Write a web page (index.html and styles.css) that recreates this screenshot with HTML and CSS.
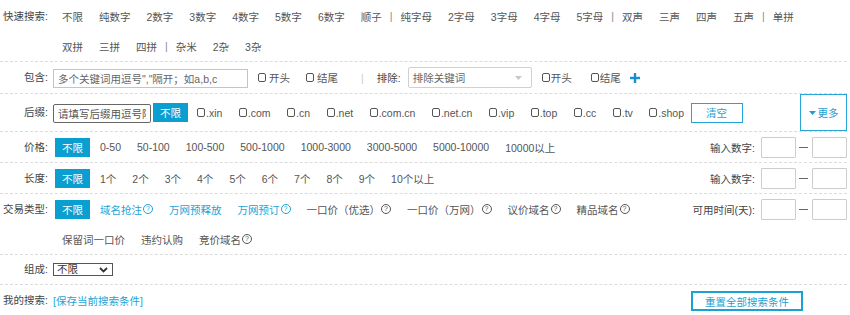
FILE: index.html
```html
<!DOCTYPE html>
<html lang="zh-CN">
<head>
  <meta charset="UTF-8" />
  <title>域名搜索</title>
  <link rel="stylesheet" href="styles.css">
</head>
<body>
  <div class="panel">

    <div class="row quick">
      <div class="label">快速搜索:</div>
      <div class="content">
        <div class="line">
          <a class="opt">不限</a><a class="opt">纯数字</a><a class="opt">2数字</a><a class="opt">3数字</a><a class="opt">4数字</a><a class="opt">5数字</a><a class="opt">6数字</a><a class="opt">顺子</a><span class="sep">|</span><a class="opt">纯字母</a><a class="opt">2字母</a><a class="opt">3字母</a><a class="opt">4字母</a><a class="opt">5字母</a><span class="sep">|</span><a class="opt">双声</a><a class="opt">三声</a><a class="opt">四声</a><a class="opt">五声</a><span class="sep">|</span><a class="opt">单拼</a>
        </div>
        <div class="line">
          <a class="opt">双拼</a><a class="opt">三拼</a><a class="opt">四拼</a><span class="sep">|</span><a class="opt">杂米</a><a class="opt">2杂</a><a class="opt">3杂</a>
        </div>
      </div>
    </div>

    <div class="row keyword">
      <div class="label">包含:</div>
      <div class="content">
        <input class="txt kw" type="text" placeholder="多个关键词用逗号&quot;,&quot;隔开；如a,b,c">
        <label class="chk spaced first"><span class="cb"></span>开头</label>
        <label class="chk spaced"><span class="cb"></span>结尾</label>
        <span class="sep light">|</span>
        <span class="sub-label">排除:</span>
        <div class="fake-select">
          <span>排除关键词</span>
          <svg width="7" height="4" viewBox="0 0 7 4"><polygon points="0,0 7,0 3.5,4" fill="#c8c8c8"/></svg>
        </div>
        <label class="chk first"><span class="cb"></span>开头</label>
        <label class="chk"><span class="cb"></span>结尾</label>
        <svg class="plus" width="10" height="10" viewBox="0 0 10 10"><rect x="3.8" y="0" width="2.4" height="10" fill="#1a8fd0"/><rect x="0" y="3.8" width="10" height="2.4" fill="#1a8fd0"/></svg>
      </div>
    </div>

    <div class="row suffix">
      <div class="label">后缀:</div>
      <div class="content">
        <input class="txt sfx-input" type="text" placeholder="请填写后缀用逗号隔开">
        <span class="btn-on">不限</span>
        <label class="chk sfx"><span class="cb"></span>.xin</label>
        <label class="chk sfx"><span class="cb"></span>.com</label>
        <label class="chk sfx"><span class="cb"></span>.cn</label>
        <label class="chk sfx"><span class="cb"></span>.net</label>
        <label class="chk sfx"><span class="cb"></span>.com.cn</label>
        <label class="chk sfx"><span class="cb"></span>.net.cn</label>
        <label class="chk sfx"><span class="cb"></span>.vip</label>
        <label class="chk sfx"><span class="cb"></span>.top</label>
        <label class="chk sfx"><span class="cb"></span>.cc</label>
        <label class="chk sfx"><span class="cb"></span>.tv</label>
        <label class="chk sfx"><span class="cb"></span>.shop</label>
        <span class="btn-line clear">清空</span>
        <div class="more">
          <svg width="7" height="4" viewBox="0 0 7 4"><polygon points="0,0 7,0 3.5,4" fill="#1e9fd3"/></svg>更多
        </div>
      </div>
    </div>

    <div class="row single">
      <div class="label">价格:</div>
      <div class="content">
        <div class="line">
          <span class="btn-on">不限</span><a class="opt">0-50</a><a class="opt">50-100</a><a class="opt">100-500</a><a class="opt">500-1000</a><a class="opt">1000-3000</a><a class="opt">3000-5000</a><a class="opt">5000-10000</a><a class="opt">10000以上</a>
        </div>
        <div class="range">
          <span>输入数字:</span><input class="num" type="text"><span class="dash"></span><input class="num" type="text">
        </div>
      </div>
    </div>

    <div class="row single">
      <div class="label">长度:</div>
      <div class="content">
        <div class="line">
          <span class="btn-on">不限</span><a class="opt">1个</a><a class="opt">2个</a><a class="opt">3个</a><a class="opt">4个</a><a class="opt">5个</a><a class="opt">6个</a><a class="opt">7个</a><a class="opt">8个</a><a class="opt">9个</a><a class="opt">10个以上</a>
        </div>
        <div class="range">
          <span>输入数字:</span><input class="num" type="text"><span class="dash"></span><input class="num" type="text">
        </div>
      </div>
    </div>

    <div class="row trade">
      <div class="label">交易类型:</div>
      <div class="content">
        <div class="lines">
          <div class="line">
            <span class="btn-on">不限</span><a class="opt blue">域名抢注<span class="q">?</span></a><a class="opt blue">万网预释放</a><a class="opt blue">万网预订<span class="q">?</span></a><a class="opt">一口价（优选）<span class="q">?</span></a><a class="opt">一口价（万网）<span class="q">?</span></a><a class="opt">议价域名<span class="q">?</span></a><a class="opt">精品域名<span class="q">?</span></a>
          </div>
          <div class="line">
            <a class="opt">保留词一口价</a><a class="opt">违约认购</a><a class="opt">竞价域名<span class="q">?</span></a>
          </div>
        </div>
        <div class="range">
          <span>可用时间(天):</span><input class="num" type="text"><span class="dash"></span><input class="num" type="text">
        </div>
      </div>
    </div>

    <div class="row compose">
      <div class="label">组成:</div>
      <div class="content">
        <div class="mini-select">
          <span>不限</span>
          <svg width="9" height="6" viewBox="0 0 9 6"><polyline points="1,1 4.5,4.5 8,1" fill="none" stroke="#333" stroke-width="1.8"/></svg>
        </div>
      </div>
    </div>

    <div class="row mine">
      <div class="label">我的搜索:</div>
      <div class="content">
        <a class="save">[保存当前搜索条件]</a>
        <span class="btn-line reset">重置全部搜索条件</span>
      </div>
    </div>

  </div>
</body>
</html>
```

FILE: styles.css
```css
body {
  margin: 0;
  font-family: "Liberation Sans", "Noto Sans CJK SC", sans-serif;
  font-size: 10.5px;
  color: #555;
  background: #fff;
}
.panel {
  margin-right: 3px;
}
.row {
  display: flex;
  border-bottom: 1px dashed #dcdcdc;
}
.label {
  width: 53px;
  padding-right: 5px;
  box-sizing: border-box;
  flex-shrink: 0;
  text-align: right;
  line-height: 30px;
  color: #444;
}
.content {
  flex: 1;
  display: flex;
  align-items: center;
}
.line {
  display: flex;
  align-items: center;
  height: 30px;
  padding-left: 1px;
}
.opt {
  display: inline-flex;
  align-items: center;
  padding: 0 8px;
  color: #555;
  white-space: nowrap;
  text-decoration: none;
  cursor: pointer;
}
.opt.blue {
  color: #1ea3d6;
}
.sep {
  color: #888;
}
.sep.light {
  color: #ccc;
  margin: 0 13px 0 23px;
}
.q {
  display: inline-block;
  width: 10px;
  height: 10px;
  margin-left: 1px;
  border: 1px solid currentColor;
  border-radius: 50%;
  box-sizing: border-box;
  font-size: 7px;
  line-height: 8px;
  text-align: center;
}

/* quick search */
.quick {
  padding-top: 1px;
}
.quick .content {
  flex-direction: column;
  align-items: flex-start;
}

/* keyword row */
.keyword {
  height: 31px;
}
.keyword .label {
  line-height: 31px;
}
.txt {
  font: inherit;
  color: #555;
  height: 19px;
  padding: 0 4px;
  box-sizing: border-box;
  outline: none;
}
.txt::placeholder {
  color: #666;
}
.kw {
  width: 195px;
  border: 1px solid #c4c4c4;
  margin-top: 2px;
}
.chk {
  display: inline-flex;
  align-items: center;
  white-space: nowrap;
  color: #555;
}
.cb {
  display: inline-block;
  width: 8px;
  height: 9px;
  margin-right: 1px;
  border: 1px solid #555;
  border-radius: 2px;
  box-sizing: border-box;
}
.chk.spaced .cb {
  margin-right: 3px;
}
.chk.first {
  margin-left: 10px;
}
.chk.spaced + .chk.spaced {
  margin-left: 16px;
}
.chk.first + .chk {
  margin-left: 19px;
}
.sub-label {
  color: #444;
}
.fake-select {
  display: flex;
  align-items: center;
  justify-content: space-between;
  width: 124px;
  height: 21px;
  margin-left: 7px;
  padding: 0 9px 0 4px;
  border: 1px solid #d0d0d0;
  border-radius: 2px;
  box-sizing: border-box;
  color: #666;
}
.plus {
  margin-left: 9px;
}

/* suffix row */
.suffix .label {
  line-height: 37px;
}
.sfx-input {
  width: 98px;
  border: 1px solid #666;
  border-radius: 2px;
  margin-top: 2px;
}
.sfx-input::placeholder {
  color: #555;
}
.btn-on {
  display: inline-flex;
  align-items: center;
  justify-content: center;
  width: 35px;
  height: 19px;
  background: #0a9fd0;
  color: #fff;
  flex-shrink: 0;
}
.suffix .btn-on {
  margin: 0 9px 0 2px;
}
.sfx {
  margin-right: 16.5px;
}
.btn-line {
  display: inline-flex;
  align-items: center;
  justify-content: center;
  height: 20px;
  border: 1px solid #23a4d6;
  box-sizing: border-box;
  color: #1e9fd3;
  white-space: nowrap;
}
.clear {
  width: 52px;
  margin-left: -10px;
}
.more {
  display: flex;
  align-items: center;
  justify-content: center;
  gap: 2px;
  width: 47px;
  height: 37px;
  margin-left: auto;
  border: 1px solid #29a6d8;
  box-sizing: border-box;
  color: #1e9fd3;
}

/* price / length / trade */
.single .content {
  justify-content: space-between;
}
.single .btn-on,
.trade .btn-on {
  margin: 0 2px 0 1px;
}
.range {
  display: flex;
  align-items: center;
  height: 30px;
  color: #444;
  white-space: nowrap;
}
.range span:first-child {
  margin-right: 6px;
}
.num {
  width: 35px;
  height: 21px;
  padding: 0;
  border: 1px solid #ccc;
  border-radius: 1px;
  box-sizing: border-box;
  outline: none;
}
.dash {
  display: inline-block;
  width: 9px;
  height: 1px;
  margin: 0 4px 0 3px;
  background: #666;
}
.trade .content {
  align-items: flex-start;
  justify-content: space-between;
}

/* compose */
.compose {
  height: 29px;
}
.compose .label {
  line-height: 29px;
}
.mini-select {
  display: flex;
  align-items: center;
  justify-content: space-between;
  width: 60px;
  height: 13px;
  padding: 0 4px 0 3px;
  border: 1px solid #555;
  box-sizing: border-box;
  color: #333;
  line-height: 11px;
}

/* my search */
.mine {
  border-bottom: none;
  height: 30px;
}
.save {
  color: #1ea3d6;
  cursor: pointer;
}
.reset {
  width: 112px;
  margin: 2px 44px 0 auto;
  border-width: 2px;
  border-color: #1aa2d4;
}
```
